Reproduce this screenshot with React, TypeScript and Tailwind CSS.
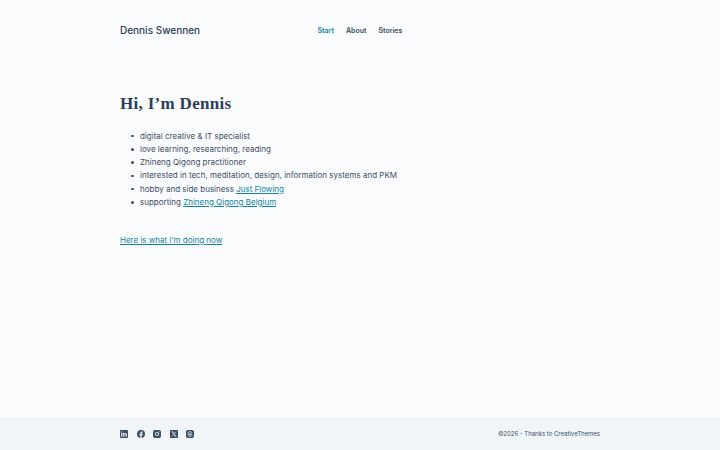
const nav = ["Start", "About", "Stories"];

const facts = [
  { text: "digital creative & IT specialist" },
  { text: "love learning, researching, reading" },
  { text: "Zhineng Qigong practitioner" },
  { text: "interested in tech, meditation, design, information systems and PKM" },
  { text: "hobby and side business ", link: "Just Flowing" },
  { text: "supporting ", link: "Zhineng Qigong Belgium" },
];

const box = "M2 0h16a2 2 0 0 1 2 2v16a2 2 0 0 1-2 2H2a2 2 0 0 1-2-2V2a2 2 0 0 1 2-2z";
const softBox = "M5 0h10a5 5 0 0 1 5 5v10a5 5 0 0 1-5 5H5a5 5 0 0 1-5-5V5a5 5 0 0 1 5-5z";

// shapes are cut out of the filled tile with evenodd, lines are drawn on top
const socials = [
  {
    name: "LinkedIn",
    d: box + "M3 7.7h3V17H3zM4.5 3a1.7 1.7 0 1 0 0 3.4a1.7 1.7 0 0 0 0-3.4zM8 7.7h2.8V9c.5-.9 1.5-1.5 2.8-1.5 2.7 0 3.4 1.8 3.4 4.2V17h-3v-4.7c0-1.2-.1-2.3-1.5-2.3S11 11.1 11 12.3V17H8z",
  },
  {
    name: "Facebook",
    d: "M20 10a10 10 0 1 0-11.6 9.9v-7H5.9V10h2.5V7.8c0-2.5 1.5-3.9 3.8-3.9 1.1 0 2.2.2 2.2.2v2.5h-1.3c-1.2 0-1.6.8-1.6 1.6V10h2.8l-.4 2.9h-2.3v7A10 10 0 0 0 20 10z",
  },
  {
    name: "Instagram",
    d: softBox + "M10 4.8a5.2 5.2 0 1 0 0 10.4a5.2 5.2 0 0 0 0-10.4zM10 7a3 3 0 1 1 0 6a3 3 0 0 1 0-6zM15.5 3.3a1.2 1.2 0 1 0 0 2.4a1.2 1.2 0 0 0 0-2.4z",
  },
  {
    name: "X",
    d: box,
    lines: "M4.5 4.2h2.7l8.300 11.600h-2.700zM15.500 4l-4.800 5.200M9.300 10.800L4.500 16",
  },
  {
    name: "Threads",
    d: softBox,
    lines: "M14.8 7.2C14.2 4.9 12.6 3.7 10 3.7c-3.2 0-5 2.2-5 6.3s1.8 6.3 5 6.3c2.8 0 4.7-1.5 4.7-3.5 0-2.2-2-3.4-4.3-3.4-1.7 0-2.8.7-2.8 2s1 1.9 2.2 1.9c1.6 0 2.5-1 2.5-3 0-1.9-.8-2.8-2.3-2.800-.9 0-1.6.4-2 1",
  },
];

export default function App() {
  return (
    <div className="flex h-screen flex-col bg-[#fafbfc] font-['Inter',sans-serif] text-[#3a4f66]">
      <header className="flex h-[60px] items-center px-[120px]">
        <a href="#" className="w-[197.5px] text-[10px] font-medium text-[#2a4058]">
          Dennis Swennen
        </a>
        <nav className="flex gap-3 pt-0.5 text-[7px] font-semibold">
          {nav.map((item, i) => (
            <a key={item} href="#" className={i === 0 ? "text-[#13869c]" : ""}>
              {item}
            </a>
          ))}
        </nav>
      </header>

      <main className="flex-1 px-[120px] pt-8">
        <h1 className="font-['Liberation_Serif',serif] text-[17px] leading-6 font-bold tracking-[0.31px] text-[#2a4058]">
          Hi, I’m Dennis
        </h1>
        <ul className="mt-[13.5px] text-[8px] leading-[13.25px]">
          {facts.map((f) => (
            <li
              key={f.text}
              className="flex items-center whitespace-pre before:mr-[6.5px] before:ml-[11px] before:size-[2.5px] before:rounded-full before:bg-[#3a4f66]"
            >
              {f.text}
              {f.link ? (
                <a href="#" className="text-[#13869c] underline">
                  {f.link}
                </a>
              ) : null}
            </li>
          ))}
        </ul>
        <p className="mt-[25px] text-[8px] leading-[13.25px]">
          <a href="#" className="text-[#13869c] underline">
            Here is what I’m doing now
          </a>
        </p>
      </main>

      <footer className="flex h-[33px] items-center justify-between bg-[#f2f5f7] px-[120px]">
        <div className="flex gap-[8.5px]">
          {socials.map((s) => (
            <a key={s.name} href="#" aria-label={s.name}>
              <svg viewBox="0 0 20 20" className="size-2" fill="currentColor" fillRule="evenodd">
                <path d={s.d} />
                {s.lines ? (
                  <path d={s.lines} fill="none" stroke="#f2f5f7" strokeWidth="1.6" />
                ) : null}
              </svg>
            </a>
          ))}
        </div>
        <p className="text-[6px]">©2026 - Thanks to CreativeThemes</p>
      </footer>
    </div>
  );
}
